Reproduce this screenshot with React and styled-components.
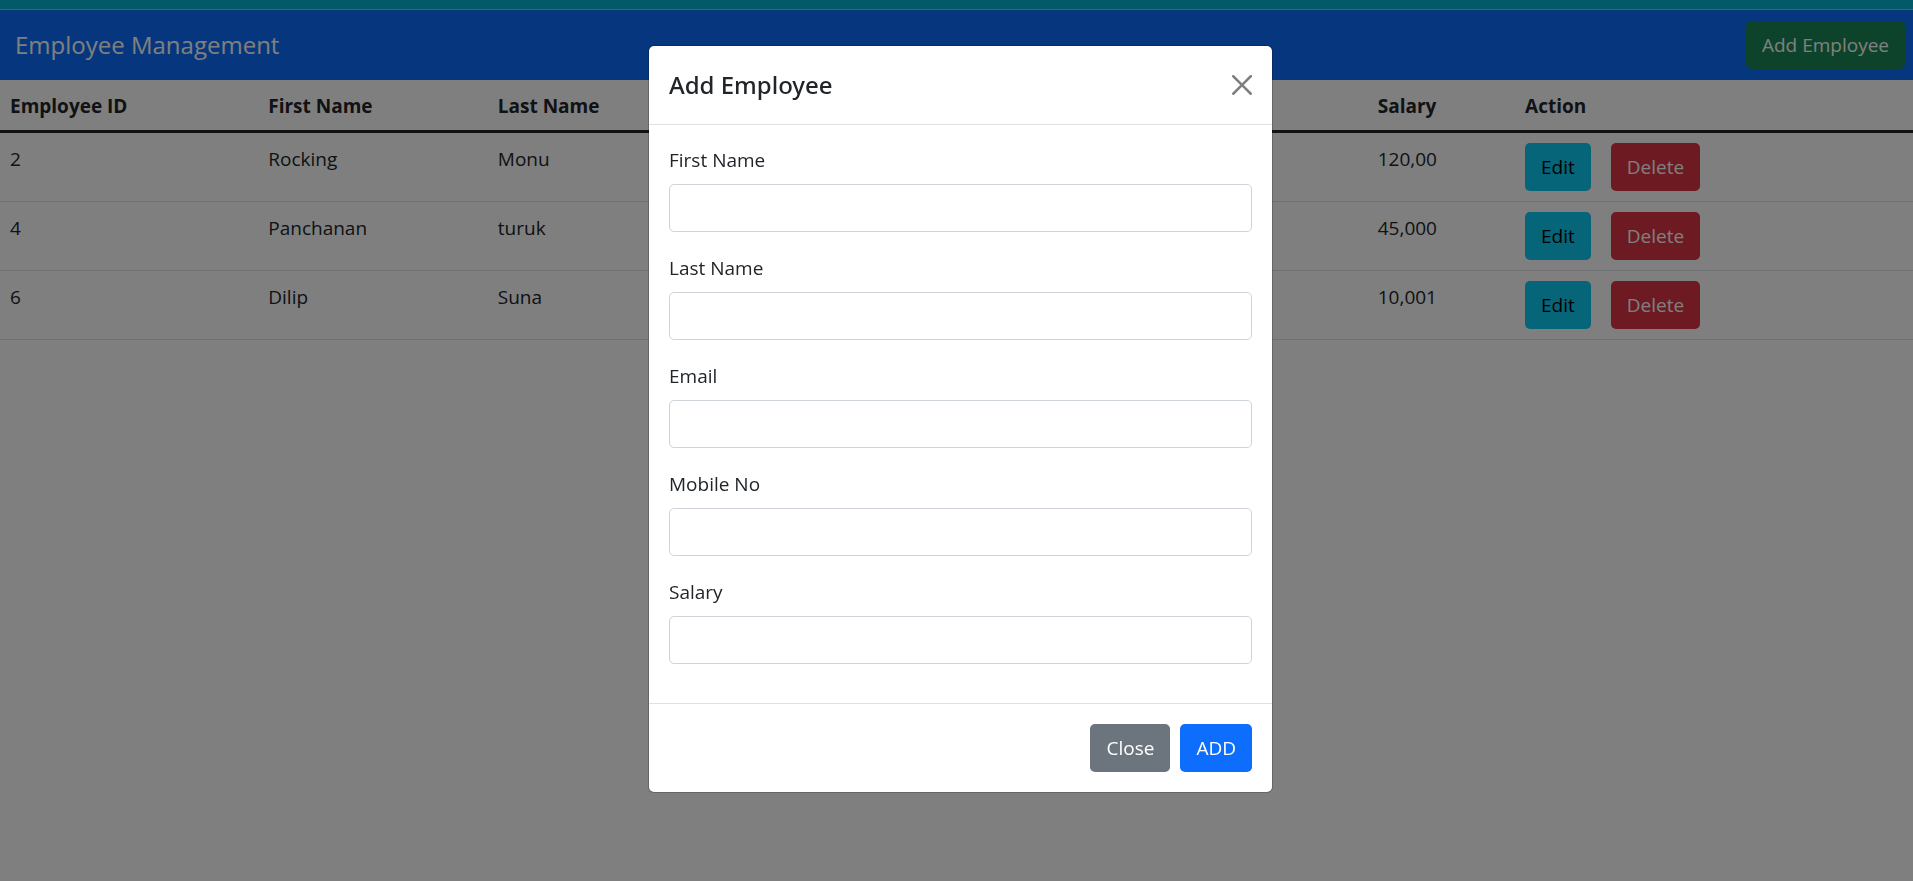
import React from "react";
import styled, { createGlobalStyle, css } from "styled-components";

const GlobalStyle = createGlobalStyle`
  *, *::before, *::after { box-sizing: border-box; }
  body {
    margin: 0;
    background: #fff;
    color: #212529;
    font-family: "Segoe UI", "Open Sans", "Noto Sans", sans-serif;
    font-size: 19px;
    line-height: 32px;
  }
`;

const variants = {
  primary: css`background: #0d6efd; color: #fff;`,
  secondary: css`background: #6c757d; color: #fff;`,
  success: css`background: #198754; color: #fff;`,
  info: css`background: #0dcaf0; color: #000;`,
  danger: css`background: #dc3545; color: #fff;`,
};

const Button = styled.button`
  height: 48px;
  padding: 0 16px;
  border: 0;
  border-radius: 5px;
  font: inherit;
  cursor: pointer;
  ${(p) => variants[p.$variant]}
`;

const TopStrip = styled.div`
  height: 10px;
  background: #04b4d2;
  border-bottom: 1px solid #44d8ee;
`;

const Navbar = styled.header`
  display: flex;
  align-items: center;
  justify-content: space-between;
  padding: 11px 8px 11px 15px;
  background: #0d6efd;
`;

const Brand = styled.a`
  color: #fff;
  font-size: 24px;
  text-decoration: none;
`;

const Table = styled.table`
  width: 100%;
  table-layout: fixed;
  border-collapse: collapse;
`;

const Col = styled.col`
  width: ${(p) => p.$width};
`;

const HeadCell = styled.th`
  padding: 10px 10px 8px;
  border-bottom: 3px solid #212529;
  text-align: left;
  font-weight: 700;
`;

const Cell = styled.td`
  padding: 10px;
  border-bottom: 1px solid #dee2e6;
  vertical-align: top;
`;

const Actions = styled.div`
  display: flex;
  gap: 20px;
`;

const Backdrop = styled.div`
  position: fixed;
  inset: 0;
  padding: 45px 0 45px 8px;
  overflow-y: auto;
  background: rgba(0, 0, 0, 0.5);
`;

const Dialog = styled.section`
  max-width: 625px;
  margin: 0 auto;
  border: 1px solid rgba(0, 0, 0, 0.2);
  border-radius: 6px;
  background: #fff;
  background-clip: padding-box;
`;

const DialogHeader = styled.div`
  display: flex;
  align-items: center;
  justify-content: space-between;
  padding: 20px;
  border-bottom: 1px solid #dee2e6;
`;

const DialogTitle = styled.h5`
  margin: 0;
  font-family: "Segoe UI", "Noto Sans", sans-serif;
  font-size: 24px;
  font-weight: 500;
  line-height: 38px;
`;

const CloseIconButton = styled.button`
  display: flex;
  padding: 0;
  border: 0;
  background: none;
  color: #000;
  opacity: 0.5;
  cursor: pointer;
`;

const DialogBody = styled.div`
  padding: 19px 20px;
`;

const Field = styled.div`
  margin-bottom: 20px;
`;

const Label = styled.label`
  display: block;
  margin-bottom: 8px;
`;

const Input = styled.input`
  display: block;
  width: 100%;
  height: 48px;
  padding: 0 15px;
  border: 1px solid #ced4da;
  border-radius: 5px;
  background: #fff;
  color: inherit;
  font: inherit;
`;

const DialogFooter = styled.div`
  display: flex;
  justify-content: flex-end;
  gap: 10px;
  padding: 20px;
  border-top: 1px solid #dee2e6;
`;

const columns = [
  { id: "id", title: "Employee ID", width: "13.5%" },
  { id: "firstName", title: "First Name", width: "12%" },
  { id: "lastName", title: "Last Name", width: "12%" },
  { id: "email", width: "19%" },
  { id: "mobile", width: "15%" },
  { id: "salary", title: "Salary", width: "7.7%" },
  { id: "action", title: "Action", width: "20.8%" },
];

const employees = [
  { id: 2, firstName: "Rocking", lastName: "Monu", salary: "120,00" },
  { id: 4, firstName: "Panchanan", lastName: "turuk", salary: "45,000" },
  { id: 6, firstName: "Dilip", lastName: "Suna", salary: "10,001" },
];

const fields = [
  { id: "firstName", label: "First Name", type: "text" },
  { id: "lastName", label: "Last Name", type: "text" },
  { id: "email", label: "Email", type: "email" },
  { id: "mobile", label: "Mobile No", type: "tel" },
  { id: "salary", label: "Salary", type: "text" },
];

function CloseIcon() {
  return (
    <svg width="20" height="20" viewBox="0 0 16 16" fill="currentColor" aria-hidden="true">
      <path d="M.293.293a1 1 0 011.414 0L8 6.586 14.293.293a1 1 0 111.414 1.414L9.414 8l6.293 6.293a1 1 0 01-1.414 1.414L8 9.414l-6.293 6.293a1 1 0 01-1.414-1.414L6.586 8 .293 1.707a1 1 0 010-1.414z" />
    </svg>
  );
}

function EmployeeTable() {
  return (
    <Table>
      <colgroup>
        {columns.map((c) => (
          <Col key={c.id} $width={c.width} />
        ))}
      </colgroup>
      <thead>
        <tr>
          {columns.map((c) => (
            <HeadCell key={c.id} scope="col">{c.title}</HeadCell>
          ))}
        </tr>
      </thead>
      <tbody>
        {employees.map((e) => (
          <tr key={e.id}>
            <Cell>{e.id}</Cell>
            <Cell>{e.firstName}</Cell>
            <Cell>{e.lastName}</Cell>
            <Cell />
            <Cell />
            <Cell>{e.salary}</Cell>
            <Cell>
              <Actions>
                <Button type="button" $variant="info">Edit</Button>
                <Button type="button" $variant="danger">Delete</Button>
              </Actions>
            </Cell>
          </tr>
        ))}
      </tbody>
    </Table>
  );
}

function AddEmployeeDialog() {
  return (
    <Backdrop>
      <Dialog role="dialog" aria-modal="true" aria-labelledby="dialog-title">
        <DialogHeader>
          <DialogTitle id="dialog-title">Add Employee</DialogTitle>
          <CloseIconButton type="button" aria-label="Close">
            <CloseIcon />
          </CloseIconButton>
        </DialogHeader>
        <DialogBody>
          {fields.map((f) => (
            <Field key={f.id}>
              <Label htmlFor={f.id}>{f.label}</Label>
              <Input id={f.id} name={f.id} type={f.type} />
            </Field>
          ))}
        </DialogBody>
        <DialogFooter>
          <Button type="button" $variant="secondary">Close</Button>
          <Button type="button" $variant="primary">ADD</Button>
        </DialogFooter>
      </Dialog>
    </Backdrop>
  );
}

export default function App() {
  return (
    <>
      <GlobalStyle />
      <TopStrip />
      <Navbar>
        <Brand href="#">Employee Management</Brand>
        <Button type="button" $variant="success">Add Employee</Button>
      </Navbar>
      <main>
        <EmployeeTable />
      </main>
      <AddEmployeeDialog />
    </>
  );
}
